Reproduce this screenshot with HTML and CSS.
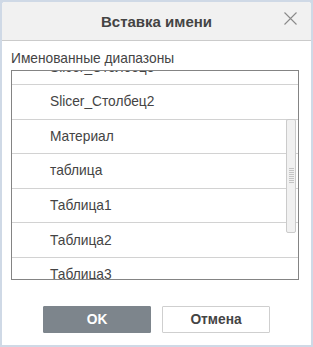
FILE: index.html
```html
<!DOCTYPE html>
<html>
<head>
<meta charset="utf-8">
<link rel="stylesheet" href="styles.css">
</head>
<body>
<div class="dialog">
  <div class="header">
    <span class="title">Вставка имени</span>
    <span class="close"><svg width="13" height="13" viewBox="0 0 13 13"><path d="M0.5 0.5L12.5 12.5M12.5 0.5L0.5 12.5" stroke="#8a8a8a" stroke-width="1.1" fill="none"/></svg></span>
  </div>
  <div class="body">
    <div class="label">Именованные диапазоны</div>
    <div class="list">
      <div class="rows">
        <div class="row">Slicer_Столбец3</div>
        <div class="row">Slicer_Столбец2</div>
        <div class="row">Материал</div>
        <div class="row">таблица</div>
        <div class="row">Таблица1</div>
        <div class="row">Таблица2</div>
        <div class="row">Таблица3</div>
      </div>
      <div class="thumb"><div class="grip"></div></div>
    </div>
  </div>
  <div class="footer">
    <button class="btn primary">OK</button>
    <button class="btn">Отмена</button>
  </div>
</div>
</body>
</html>
```
FILE: styles.css
```css
html, body {
  margin: 0;
  padding: 0;
}
body {
  background: #cfd9e6;
  width: 313px;
  height: 347px;
  font-family: "Liberation Sans", Arial, sans-serif;
  color: #444;
}
.dialog {
  margin: 2px;
  width: 309px;
  height: 343px;
  background: #fff;
  border-radius: 3px 3px 0 0;
  overflow: hidden;
  display: flex;
  flex-direction: column;
}
.header {
  position: relative;
  height: 38px;
  background: #f1f1f1;
  border-bottom: 1px solid #cbcbcb;
  display: flex;
  align-items: center;
  justify-content: center;
}
.title {
  font-weight: bold;
  font-size: 15px;
  color: #444;
}
.close {
  position: absolute;
  right: 14px;
  top: 10px;
  width: 13px;
  height: 13px;
  display: block;
}
.close svg { display: block; }
.body {
  padding: 10px 12px 0 9px;
}
.label {
  font-size: 13.75px;
  line-height: 16px;
  height: 16px;
  margin-bottom: 3px;
}
.list {
  position: relative;
  height: 208px;
  border: 1px solid #848484;
  overflow: hidden;
}
.rows {
  margin-top: -20.6px;
}
.row {
  box-sizing: border-box;
  height: 34.6px;
  border-bottom: 1px solid #d2d2d2;
  padding-left: 38px;
  display: flex;
  align-items: center;
  font-size: 13.75px;
  color: #444;
}
.thumb {
  position: absolute;
  right: 2px;
  top: 48px;
  width: 8px;
  height: 112px;
  background: #f1f1f1;
  border: 1px solid #cbcbcb;
  border-radius: 2px;
  display: flex;
  align-items: center;
  justify-content: center;
}
.grip {
  width: 5px;
  height: 16px;
  background: repeating-linear-gradient(to bottom, #c4c4c4 0, #c4c4c4 1px, transparent 1px, transparent 2px);
}
.footer {
  margin-top: 26px;
  display: flex;
  justify-content: center;
  gap: 11px;
}
.btn {
  box-sizing: border-box;
  width: 108px;
  height: 27px;
  border: 1px solid #cfcfcf;
  background: #fff;
  font-family: "Liberation Sans", Arial, sans-serif;
  font-weight: bold;
  font-size: 13.75px;
  color: #444;
  border-radius: 1px;
  padding: 0;
}
.btn.primary {
  background: #7d858c;
  border-color: #7d858c;
  color: #fff;
}
```
